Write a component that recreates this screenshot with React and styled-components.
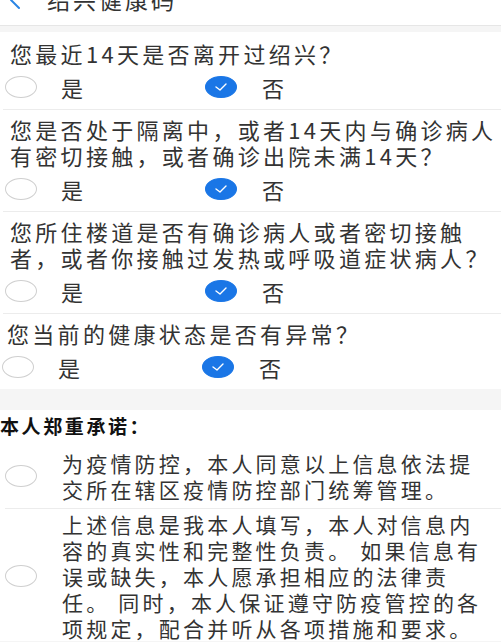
import React from "react";
import styled, { createGlobalStyle } from "styled-components";

const Global = createGlobalStyle`
  html, body { margin: 0; padding: 0; background: #ffffff; }
  body { font-family: "Noto Sans CJK SC", "Noto Sans", sans-serif; color: #333; overflow: hidden; }
  * { box-sizing: border-box; }
`;

const Page = styled.div`
  width: 501px;
  height: 642px;
  overflow: hidden;
  display: flex;
  flex-direction: column;
  background: #fff;
`;

const Header = styled.header`
  height: 52px;
  margin-top: -26px;
  flex: none;
  display: flex;
  align-items: center;
  padding-left: 8px;
  border-bottom: 1px solid #e6e6e6;
  background: #fff;
`;

const Back = styled.span`
  width: 14px;
  display: flex;
  align-items: center;
  margin-right: 25px;
`;

const Title = styled.h1`
  margin: 0;
  font-size: 23px;
  font-weight: 400;
  letter-spacing: 3px;
  color: #333;
  line-height: 1;
`;

const Band = styled.div`
  flex: none;
  height: ${(p) => p.$h}px;
  background: #f5f5f5;
`;

const Question = styled.section`
  flex: none;
  padding: ${(p) => p.$pt}px 0 1px 7px;
  border-bottom: ${(p) => (p.$last ? "none" : "1px solid #ececec")};
  margin-left: ${(p) => (p.$last ? "0" : "3px")};
`;

const QText = styled.p`
  margin: 0;
  font-size: 22px;
  line-height: 26px;
  letter-spacing: 3.3px;
  color: #333;
`;

const Line = styled.span`
  display: block;
  white-space: nowrap;
`;

const Options = styled.div`
  height: 42px;
  display: flex;
  align-items: center;
  margin-left: -5px;
`;

const Option = styled.label`
  width: 200px;
  display: flex;
  align-items: center;
  font-size: 22px;
  color: #333;
`;

const Radio = styled.span`
  flex: none;
  width: 32px;
  height: 22px;
  border-radius: 50%;
  border: 1px solid ${(p) => (p.$checked ? "#1a76e6" : "#cfcfcf")};
  background: ${(p) => (p.$checked ? "#1a76e6" : "#fff")};
  display: flex;
  align-items: center;
  justify-content: center;
  margin-right: ${(p) => p.$gap || 24}px;
`;

const Heading = styled.h2`
  flex: none;
  margin: 0;
  height: 32px;
  line-height: 32px;
  font-size: 19px;
  font-weight: 700;
  letter-spacing: 2.6px;
  color: #111;
`;

const Pledge = styled.div`
  flex: none;
  display: flex;
  align-items: center;
  padding: ${(p) => p.$pt}px 0 ${(p) => p.$pb}px;
  margin-left: 5px;
  border-bottom: ${(p) => (p.$last ? "none" : "1px solid #ececec")};
`;

const PText = styled.p`
  margin: 0;
  font-size: 21px;
  line-height: 26px;
  letter-spacing: 3.2px;
  color: #333;
`;

const Check = () => (
  <svg width="14" height="10" viewBox="0 0 14 10">
    <polyline points="2,5 6,8 12,2" fill="none" stroke="#fff" strokeWidth="1.4" strokeLinecap="round" strokeLinejoin="round" />
  </svg>
);

const questions = [
  { pt: 8, lines: ["您最近14天是否离开过绍兴？"] },
  { pt: 6, lines: ["您是否处于隔离中，或者14天内与确诊病人", "有密切接触，或者确诊出院未满14天？"] },
  { pt: 6, lines: ["您所住楼道是否有确诊病人或者密切接触", "者，或者你接触过发热或呼吸道症状病人？"] },
  { pt: 6, lines: ["您当前的健康状态是否有异常？"] },
];

const pledges = [
  { pt: 8, pb: 6, lines: ["为疫情防控，本人同意以上信息依法提", "交所在辖区疫情防控部门统筹管理。"] },
  {
    pt: 2,
    pb: 0,
    lines: [
      "上述信息是我本人填写，本人对信息内",
      "容的真实性和完整性负责。 如果信息有",
      "误或缺失，本人愿承担相应的法律责",
      "任。 同时，本人保证遵守防疫管控的各",
      "项规定，配合并听从各项措施和要求。",
    ],
  },
];

export default function App() {
  return (
    <Page>
      <Global />
      <Header>
        <Back>
          <svg width="13" height="20" viewBox="0 0 13 20">
            <polyline points="11,2 3,10 11,18" fill="none" stroke="#2b85e4" strokeWidth="2" strokeLinecap="round" strokeLinejoin="round" />
          </svg>
        </Back>
        <Title>绍兴健康码</Title>
      </Header>
      <Band $h={6} />
      {questions.map((q, i) => (
        <Question key={i} $pt={q.pt} $last={i === questions.length - 1}>
          <QText>
            {q.lines.map((l) => (
              <Line key={l}>{l}</Line>
            ))}
          </QText>
          <Options>
            <Option>
              <Radio />是
            </Option>
            <Option>
              <Radio $checked $gap={25}>
                <Check />
              </Radio>
              否
            </Option>
          </Options>
        </Question>
      ))}
      <Band $h={21} />
      <Heading>本人郑重承诺：</Heading>
      {pledges.map((p, i) => (
        <Pledge key={i} $pt={p.pt} $pb={p.pb} $last={i === pledges.length - 1}>
          <Radio $gap={25} />
          <PText>
            {p.lines.map((l) => (
              <Line key={l}>{l}</Line>
            ))}
          </PText>
        </Pledge>
      ))}
      <Band $h={20} />
    </Page>
  );
}
